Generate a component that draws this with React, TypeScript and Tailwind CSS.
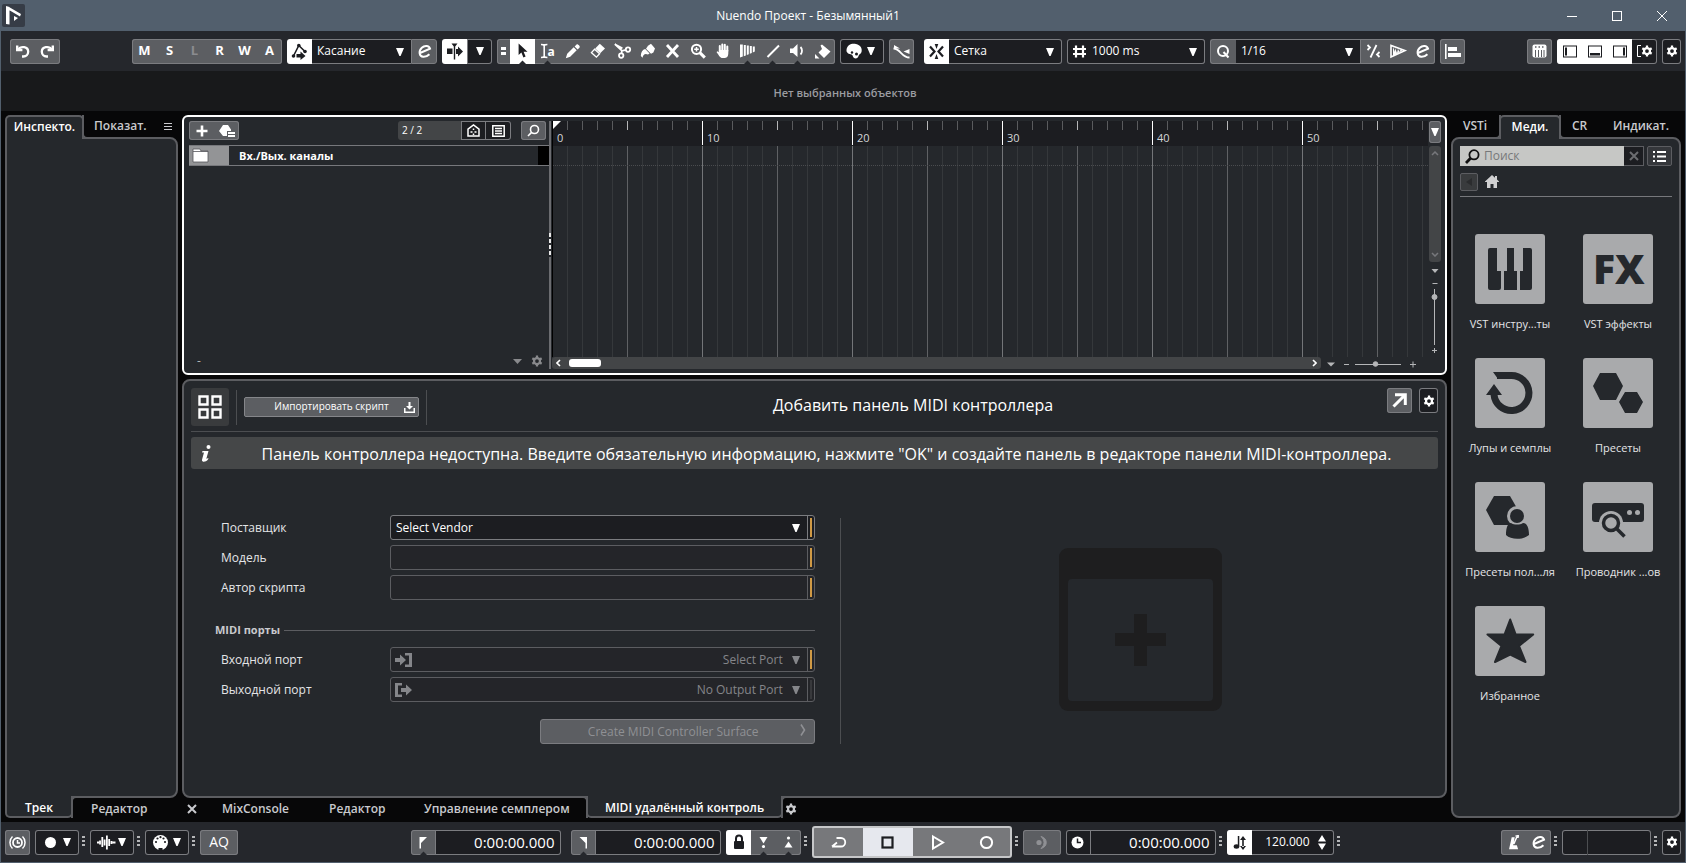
import React from 'react'
import clsx from 'clsx'

interface GlyphProps {
  children: React.ReactNode
  className?: string
}

// every toolbar glyph is drawn on the same 25x25 button grid
function Glyph({ children, className }: GlyphProps) {
  return (
    <svg viewBox="0 0 25 25" className={clsx('w-[25px] h-[25px] shrink-0', className)} fill="currentColor" aria-hidden="true">
      {children}
    </svg>
  )
}

function Caret({ className }: { className?: string }) {
  return (
    <svg viewBox="0 0 8 8" className={clsx('w-2 h-2 shrink-0', className)} fill="currentColor" aria-hidden="true">
      <path d="M0 0H8L4.6 8H3.4Z" />
    </svg>
  )
}

const UndoGlyph = () => (
  <Glyph>
    <path d="M6 6.5h2.4v3.4h4v2.4H6z" />
    <path d="M8 10.8C11 6.5 18.2 7.5 18.2 12.8a4.8 4.8 0 0 1-4.8 4.7H12" fill="none" stroke="currentColor" strokeWidth="2.3" />
  </Glyph>
)

const RedoGlyph = () => (
  <Glyph className="-scale-x-100">
    <path d="M6 6.5h2.4v3.4h4v2.4H6z" />
    <path d="M8 10.8C11 6.5 18.2 7.5 18.2 12.8a4.8 4.8 0 0 1-4.8 4.7H12" fill="none" stroke="currentColor" strokeWidth="2.3" />
  </Glyph>
)

const EditGlyph = () => (
  <Glyph>
    <path
      d="M8 14L18 9.6C17 6.4 12.5 6.2 9.8 8.8C6.4 12 7 17.4 11.2 17.8C13.6 18 15.6 17 17.4 15.2"
      fill="none"
      stroke="currentColor"
      strokeWidth="2"
    />
  </Glyph>
)

const GearGlyph = ({ className }: { className?: string }) => (
  <svg viewBox="0 0 16 16" className={clsx('shrink-0', className ?? 'w-3.5 h-3.5')} fill="none" stroke="currentColor" aria-hidden="true">
    <circle cx="8" cy="8" r="4" strokeWidth="3" />
    <path d="M8 .8v3M8 12.2v3M1.8 4.4l2.5 1.5M11.7 10.1l2.5 1.5M1.8 11.6l2.5-1.5M11.7 5.9l2.5-1.5" strokeWidth="3" />
  </svg>
)

const TOOLS = [
  { name: 'Выбор объекта', active: true, notch: true, icon: <path d="M8.6 4.5V16l2.8-2.4 2 4.8 2.2-1-2-4.6h3.9z" /> },
  {
    name: 'Выбор диапазона',
    notch: true,
    icon: (
      <>
        <path d="M6 5.5c2 0 2.8.3 3.2 1 .4-.7 1.2-1 3.2-1M6 18.5c2 0 2.8-.3 3.2-1 .4.7 1.2 1 3.2 1M9.2 6v12" fill="none" stroke="currentColor" strokeWidth="1.6" />
        <text x="12.6" y="17" fontSize="12" fontWeight="700">a</text>
      </>
    )
  },
  { name: 'Карандаш', icon: <path d="M5.8 19.2l1.4-4.4 6.5-6.5 3 3-6.5 6.5zM14.6 7.4l2-2c1-1 4 2 3 3l-2 2z" /> },
  {
    name: 'Ластик',
    icon: (
      <>
        <path d="M10.2 9.4l4.6-4.6 5.2 4.6-4.8 4.8z" />
        <path d="M9.6 10.2l-3.2 3.4 5 4.6 3.2-3.4z" fill="none" stroke="currentColor" strokeWidth="1.3" />
      </>
    )
  },
  {
    name: 'Разрезать',
    icon: (
      <g fill="none" stroke="currentColor" strokeWidth="1.8">
        <circle cx="11.2" cy="16.6" r="2.2" />
        <circle cx="18" cy="10.6" r="2.2" />
        <path d="M4.8 5.2L12 11.8l4-1M12 11.8l-.6 3M4.8 5.2l7.6 4.2" />
      </g>
    )
  },
  {
    name: 'Склеить',
    icon: (
      <>
        <path d="M13 6.800l3-2 4 4.600-1.600 4-2.400 1.400-5-5z" />
        <path d="M10.200 10l4.400 4.600-1.600.8C10 14 8 15.500 7.600 18.800L5.800 17C6 13 7.500 10.800 10.200 10z" />
      </>
    )
  },
  { name: 'Заглушить', icon: <path d="M7 6l11 12M18 6L7 18" fill="none" stroke="currentColor" strokeWidth="2.8" /> },
  {
    name: 'Масштаб',
    icon: (
      <g fill="none" stroke="currentColor">
        <circle cx="11.5" cy="10.3" r="4.6" strokeWidth="2" />
        <path d="M14.8 13.6l5 5" strokeWidth="3" />
        <path d="M9.2 10.3h4.6M11.5 8v4.6" strokeWidth="1.5" />
      </g>
    )
  },
  {
    name: 'Рука',
    icon: (
      <>
        <path d="M9.8 12.5V7M12.3 12V5.5M14.8 12V5.8M17.3 12V7.5" stroke="currentColor" strokeWidth="2" strokeLinecap="round" />
        <path d="M8.8 11h9.5v3.5c0 3-1.5 4.500-4 4.500h-1.800c-2 0-3-1.500-6-6l1.300-.8 1.500 1.400z" />
      </>
    )
  },
  { name: 'Комп', notch: true, icon: <path d="M5 5.500h2.800V17.500L5 18.500zM8.800 6h2v10.400l-2 .8zM11.800 6.500h2v8.800l-2 .7zM14.800 7h2v7l-2 .8zM17.800 7.500h2v5l-2 1z" /> },
  { name: 'Линия', notch: true, icon: <path d="M7.5 18L19 6.500" stroke="currentColor" strokeWidth="2" /> },
  {
    name: 'Прослушать',
    notch: true,
    icon: (
      <>
        <path d="M5 9.500h3l4.500-4.500v13L8 14H5z" />
        <path d="M15.500 8c2 2 2 5.500 0 7.500" fill="none" stroke="currentColor" strokeWidth="1.8" />
      </>
    )
  },
  { name: 'Цвет', icon: <path d="M10.500 6.500l1.500-1 8.500 7-6.500 6.500-5.500-5.500 3.500-3.500zM5 15l4.500 4.500H5z" /> }
]

interface IconButtonProps extends React.ButtonHTMLAttributes<HTMLButtonElement> {
  label: string
}

function IconButton({ label, className, children, ...rest }: IconButtonProps) {
  return (
    <button type="button" aria-label={label} className={clsx('flex items-center justify-center', className)} {...rest}>
      {children}
    </button>
  )
}

interface GroupProps {
  children: React.ReactNode
  className?: string
  height?: string
  dark?: boolean
}

// rounded bordered strip that holds a set of toolbar controls
function Group({ children, className, height = 'h-[25px]', dark }: GroupProps) {
  return (
    <div
      className={clsx(
        'flex shrink-0 items-stretch overflow-hidden rounded-[3px] ring-1 ring-inset ring-[#7b7c80]',
        height,
        dark ? 'bg-[#1c1d21]' : 'bg-[#5c5e62]',
        className
      )}
    >
      {children}
    </div>
  )
}

function Dropdown({ label, value, className }: { label: string; value: string; className?: string }) {
  return (
    <div className={clsx('relative h-[25px] rounded-[3px] border border-[#7b7c80] bg-[#1c1d21]', className)}>
      <select aria-label={label} className="h-full w-full appearance-none bg-transparent pl-[5px] text-xs outline-none">
        <option>{value}</option>
      </select>
      <Caret className="pointer-events-none absolute right-[7px] top-2" />
    </div>
  )
}

function Dots() {
  return <span className="h-3 w-[3px] shrink-0 bg-[repeating-linear-gradient(#b5b6b8_0_2px,transparent_2px_4px)]" />
}

function TitleBar() {
  return (
    <header className="grid h-[31px] shrink-0 grid-cols-[1fr_auto_1fr] items-center text-white">
      <svg viewBox="0 0 23 23" className="ml-px h-[23px] w-[23px]" aria-hidden="true">
        <rect width="23" height="23" rx="2" fill="#363c46" />
        <path d="M4 2l3.500 1v17.500L4 20zM7 3l12 7-1 2.500L7 6z" fill="#fff" />
        <path d="M12 12l4 2-4 3z" fill="#fff" />
      </svg>
      <h1 className="mr-[70px] text-xs">Nuendo Проект - Безымянный1</h1>
      <div className="flex justify-end">
        <IconButton label="Свернуть" className="h-[31px] w-[45px]">
          <svg viewBox="0 0 10 10" className="h-2.5 w-2.5" stroke="#fff"><path d="M0 5.500h10" /></svg>
        </IconButton>
        <IconButton label="Развернуть" className="h-[31px] w-[45px]">
          <svg viewBox="0 0 10 10" className="h-2.5 w-2.5" stroke="#fff" fill="none"><rect x=".5" y=".5" width="9" height="9" /></svg>
        </IconButton>
        <IconButton label="Закрыть" className="h-[31px] w-[46px]">
          <svg viewBox="0 0 10 10" className="h-2.5 w-2.5" stroke="#fff"><path d="M0 0l10 10M10 0L0 10" /></svg>
        </IconButton>
      </div>
    </header>
  )
}

const STATES = ['M', 'S', 'L', 'R', 'W', 'A']

function Toolbar() {
  return (
    <div className="flex h-10 shrink-0 items-center gap-[5px] bg-[#25272c] pl-[9px] pr-1 text-white">
      <Group className="mr-[67px]">
        <IconButton label="Отменить"><UndoGlyph /></IconButton>
        <IconButton label="Повторить"><RedoGlyph /></IconButton>
      </Group>

      <Group>
        {STATES.map((s) => (
          <button key={s} type="button" className={clsx('w-[25px] text-[13px] font-bold', s === 'L' && 'text-[#8b8c90]')}>
            {s}
          </button>
        ))}
      </Group>

      <div className="flex">
        <IconButton label="Автоматизация" className="rounded-l-[3px] bg-white text-[#1c1d21]">
          <Glyph>
            <path d="M6.5 17L11.8 6.5L18 12.5" fill="none" stroke="currentColor" strokeWidth="1.6" />
            <circle cx="6.5" cy="17" r="1.8" /><circle cx="11.8" cy="6.5" r="1.8" /><circle cx="18" cy="12.5" r="1.8" />
            <path d="M9.5 15h4v-2.500l5 4.500-5 4v-2.500h-4z" />
          </Glyph>
        </IconButton>
        <Dropdown label="Режим автоматизации" value="Касание" className="w-[99px] rounded-none border-x-0" />
        <IconButton label="Панель автоматизации" className="w-[26px] rounded-r-[3px] border border-[#7b7c80] bg-[#5c5e62]">
          <span className="-my-px flex"><EditGlyph /></span>
        </IconButton>
      </div>

      <div className="flex">
        <IconButton label="Автопрокрутка" className="rounded-l-[3px] bg-white text-[#1c1d21]">
          <Glyph>
            <path d="M5 9.500h5.500v5.500H5zM9.500 4.500h6l-2.300 3v13h-1.400v-13zM14 10h2V7.500l5 5-5 5V15h-2z" />
          </Glyph>
        </IconButton>
        <Group dark className="w-[25px] rounded-l-none">
          <IconButton label="Параметры автопрокрутки" className="w-full"><Caret /></IconButton>
        </Group>
      </div>

      <Group>
        <IconButton label="Инструменты" className="w-[13px]">
          <svg viewBox="0 0 5 8" className="h-2 w-[5px]" fill="currentColor"><path d="M0 0h5v3H0zM0 5h5v3H0z" /></svg>
        </IconButton>
        {TOOLS.map((tool) => (
          <IconButton key={tool.name} label={tool.name} className={clsx(tool.active && 'bg-white text-[#1c1d21]')}>
            <Glyph>
              {tool.icon}
              {tool.notch && <path d="M9 25l3.500-3.500L16 25z" fill="#25272c" />}
            </Glyph>
          </IconButton>
        ))}
      </Group>

      <Group dark className="w-11">
        <IconButton label="Цвета" className="w-full pr-2">
          <Glyph>
            <path d="M4.500 11C5 5.500 10 4 14 5c4.500 1 6.500 4.500 5.500 8-.5 2-2.500 2-3 4-.4 2-2.500 3-4.500 2-1.500-1-1-3-2.500-3.500C7 15 4.200 14 4.500 11z" />
            <circle cx="10" cy="13.5" r="1.2" fill="#1c1d21" /><circle cx="14.5" cy="15" r="1.5" fill="#1c1d21" />
          </Glyph>
          <Caret />
        </IconButton>
      </Group>

      <Group className="mr-[5px]">
        <IconButton label="Кроссфейд">
          <Glyph>
            <path d="M4.500 9.500c7 0 8 9 16 9" fill="none" stroke="currentColor" strokeWidth="1.8" />
            <path d="M5 6l6 3.500H5zM20.500 10v5l-6-2.500z" />
          </Glyph>
        </IconButton>
      </Group>

      <div className="flex">
        <IconButton label="Привязка" className="rounded-l-[3px] bg-white text-[#1c1d21]">
          <Glyph>
            <path d="M6 7.500l4.500 5-4.500 5M19 7.500l-4.500 5 4.500 5" fill="none" stroke="currentColor" strokeWidth="2.2" />
            <path d="M10.700 5h3.600l-1.800 5zM10.700 20h3.600l-1.800-5z" />
          </Glyph>
        </IconButton>
        <Dropdown label="Тип привязки" value="Сетка" className="w-[113px] rounded-l-none border-l-0" />
      </div>

      <Group dark>
        <Glyph className="-mr-[5px]">
          <path d="M9 6.500v12M16 6.500v12M6 10h13M6 15h13" stroke="currentColor" strokeWidth="2.2" />
        </Glyph>
        <Dropdown label="Шаг сетки" value="1000 ms" className="w-[118px] rounded-l-none border-l-0" />
      </Group>

      <div className="flex">
        <IconButton label="Квантизация" className="rounded-l-[3px] border border-r-0 border-[#7b7c80] bg-[#5c5e62]">
          <Glyph className="-my-px">
            <circle cx="12" cy="12" r="5" fill="none" stroke="currentColor" strokeWidth="2" />
            <path d="M12.500 13l5 5.500" stroke="currentColor" strokeWidth="2" />
          </Glyph>
        </IconButton>
        <Dropdown label="Пресет квантизации" value="1/16" className="w-[124px] rounded-none border-x-0" />
        <Group className="rounded-l-none">
          <IconButton label="Итеративная квантизация">
            <Glyph>
              <path d="M7.500 6l2.500 2.500L7.500 11M19.500 13L17 15.500l2.500 2.500M16.500 6l-6 12.500" fill="none" stroke="currentColor" strokeWidth="1.8" />
            </Glyph>
          </IconButton>
          <IconButton label="Квантизация аудио">
            <Glyph>
              <path d="M6 18V6.500l14 5z" fill="none" stroke="currentColor" strokeWidth="1.6" />
              <path d="M8 14V8l2 5V9l2 5 1-4 1.500 3 1-2.500 2 1L8 17z" />
            </Glyph>
          </IconButton>
          <IconButton label="Панель квантизации"><EditGlyph /></IconButton>
        </Group>
      </div>

      <Group>
        <IconButton label="Выравнивание">
          <Glyph><path d="M5 5h1.600v15H5zM8 8h9v4H8zM8 14h13v4H8z" /></Glyph>
        </IconButton>
      </Group>

      <Group className="ml-auto">
        <IconButton label="Экранная клавиатура">
          <Glyph>
            <rect x="5.5" y="5.5" width="14" height="13" rx="2" />
            <path d="M8 8h1.500M11.500 8h1.500M15 8h1.500" stroke="#5c5e62" strokeWidth="1.5" />
            <path d="M8.500 11v7M11.500 11v7M14.500 11v7M17 11v7" stroke="#5c5e62" />
          </Glyph>
        </IconButton>
      </Group>

      <Group dark>
        <span className="flex bg-white text-[#1c1d21]">
          <IconButton label="Левая зона">
            <Glyph><rect x="6.5" y="7" width="13" height="11" fill="none" stroke="currentColor" /><path d="M8 8.500h2v8H8z" /></Glyph>
          </IconButton>
          <IconButton label="Нижняя зона">
            <Glyph><rect x="6.5" y="7" width="13" height="11" fill="none" stroke="currentColor" /><path d="M8 14h10v2.500H8z" /></Glyph>
          </IconButton>
          <IconButton label="Правая зона">
            <Glyph><rect x="6.5" y="7" width="13" height="11" fill="none" stroke="currentColor" /><path d="M16 8.500h2v8h-2z" /></Glyph>
          </IconButton>
        </span>
        <IconButton label="Настройка окна" className="w-[25px]">
          <svg viewBox="0 0 4 12" className="h-3 w-1" fill="none" stroke="currentColor"><path d="M4 .5H.5v11H4" /></svg>
          <GearGlyph className="h-3 w-3" />
        </IconButton>
      </Group>

      <Group dark className="w-[19px]">
        <IconButton label="Настройка панели" className="w-full"><GearGlyph className="h-3 w-3" /></IconButton>
      </Group>
    </div>
  )
}

const TAB = 'text-xs font-semibold whitespace-nowrap'

function LeftZone() {
  return (
    <aside className="flex flex-col">
      <div className="relative z-10 flex h-6 items-stretch">
        <button type="button" className={clsx(TAB, '-mr-0.5 w-[79px] rounded-t-[5px] border-2 border-b-0 border-[#5c5d61] bg-[#25282c] pb-0.5 text-white')}>
          Инспекто.
        </button>
        <div className="relative mr-2 flex flex-1 items-center justify-between rounded-bl-[5px] border-b-2 border-l-2 border-[#5c5d61] bg-[#070708] pl-2.5 text-[#c9cace]">
          <button type="button" className={TAB}>Показат.</button>
          <IconButton label="Меню" className="-mr-0.5 h-2 w-2">
            <svg viewBox="0 0 8 7" className="h-[7px] w-2" stroke="currentColor"><path d="M0 .5h8M0 3.500h8M0 6.500h8" /></svg>
          </IconButton>
        </div>
      </div>
      <div className="-mt-0.5 flex-1 rounded-r-[8px] border-2 border-[#5c5d61] bg-[#25282c]" />
      <div className="relative -mt-0.5 flex h-[22px] items-stretch">
        <button type="button" className={clsx(TAB, '-mr-0.5 w-[68px] rounded-b-[5px] border-2 border-t-0 border-[#5c5d61] bg-[#25282c] pt-1 text-white')}>
          Трек
        </button>
        <div className="relative mr-2 flex flex-1 items-center rounded-tl-[5px] border-l-2 border-t-2 border-[#5c5d61] bg-[#070708] pl-[18px] pt-0.5 text-[#c9cace]">
          <button type="button" className={TAB}>Редактор</button>
        </div>
      </div>
    </aside>
  )
}

function TrackList() {
  return (
    <div className="flex w-[364px] shrink-0 flex-col">
      <div className="ml-1 mr-[3px] flex h-[19px] items-stretch text-white">
        <Group height="h-[19px]" className="w-[50px]">
          <IconButton label="Добавить трек" className="w-[25px]">
            <svg viewBox="0 0 12 12" className="h-3 w-3" stroke="#fff" strokeWidth="2.6"><path d="M6 .5v11M.5 6h11" /></svg>
          </IconButton>
          <IconButton label="Пресет трека" className="w-[25px]">
            <svg viewBox="0 0 16 12" className="h-3 w-4" fill="#fff">
              <path d="M4 0h5l3 4.500V6H8v5H4L0 6z" /><path d="M9 7h7v2H9zM9 10h7v2H9z" />
            </svg>
          </IconButton>
        </Group>
        <span className="ml-auto flex w-[63px] items-center rounded-l-[3px] bg-[#434547] pl-1 text-[10px]">2 / 2</span>
        <Group dark height="h-[19px]" className="w-[50px] rounded-l-none">
          <IconButton label="Видимость агентов" className="w-[25px] border-r border-[#7b7c80]">
            <svg viewBox="0 0 13 13" className="h-[13px] w-[13px]" fill="none" stroke="#fff" strokeWidth="1.5">
              <path d="M1 5.200L6.500 1 12 5.200V12H1z" /><path d="M3.500 8h2M7.500 8h2M6.500 4.500v1.500M6.500 9.500V11" />
            </svg>
          </IconButton>
          <IconButton label="Разделить список" className="w-[25px]">
            <svg viewBox="0 0 13 12" className="h-3 w-[13px]" fill="none" stroke="#fff" strokeWidth="1.5"><path d="M.8.8h11.400v10.400H.8zM3 3.500h7M3 6h7M3 8.500h7" /></svg>
          </IconButton>
        </Group>
        <Group height="h-[19px]" className="ml-2.5 w-[25px]">
          <IconButton label="Найти трек" className="w-full">
            <svg viewBox="0 0 13 13" className="h-[13px] w-[13px]" fill="none" stroke="#fff" strokeWidth="1.6"><circle cx="7.5" cy="5.5" r="4" /><path d="M4.600 8.400L1 12" /></svg>
          </IconButton>
        </Group>
      </div>

      <div className="ml-1 mt-[5px] flex h-[21px] items-stretch border-y border-[#77787c]">
        <span className="flex w-10 items-center bg-[#939496] pl-[3px]">
          <svg viewBox="0 0 17 15" className="h-[15px] w-[17px]" fill="#fff"><path d="M1 1h7l1 2h7v11H1z" stroke="#55565a" strokeWidth=".8" /><path d="M1 3.500h15" stroke="#55565a" strokeWidth=".8" /></svg>
        </span>
        <span className="flex flex-1 items-center pl-2.5 pt-0.5 text-[11px] font-bold text-white">Вх./Вых. каналы</span>
        <span className="w-[11px] bg-black" />
      </div>

      <div className="mt-auto flex h-4 items-center justify-between pl-3 pr-1.5 text-xs text-[#b5b6b8]">
        <span>-</span>
        <span className="flex items-center gap-[9px] text-[#898a8d]">
          <svg viewBox="0 0 9 5" className="h-[5px] w-[9px]" fill="currentColor"><path d="M0 0h9L4.500 5z" /></svg>
          <GearGlyph className="h-3 w-3" />
        </span>
      </div>
    </div>
  )
}

const SECONDS = Array.from({ length: 140 }, (_, i) => i)
const LABELS = [0, 10, 20, 30, 40, 50]
const PX_PER_SECOND = 15

function Timeline() {
  return (
    <div className="flex min-w-0 flex-1 flex-col">
      <div className="flex flex-1">
        <div className="flex min-w-0 flex-1 flex-col border-l border-black">
          <div className="relative h-[25px] overflow-hidden bg-[#1c1d21]">
            <svg width="100%" height="25" className="absolute inset-0" aria-hidden="true">
              {SECONDS.map((s) => (
                <path
                  key={s}
                  d={`M${s * PX_PER_SECOND - 0.5} 0v${s % 10 ? 9 : 24}`}
                  stroke={s % 10 === 0 ? '#fff' : s % 5 === 0 ? '#b5b6b8' : '#5a5b5e'}
                />
              ))}
              <path d="M0 0h8L0 8z" fill="#fff" />
            </svg>
            <div className="relative flex pt-[9px] text-[11px] leading-4 text-[#d5d6d8]">
              {LABELS.map((n) => (
                <span key={n} className="w-[150px] shrink-0 pl-1">{n}</span>
              ))}
            </div>
          </div>
          <svg width="100%" className="h-[211px] flex-1" aria-hidden="true">
            {SECONDS.slice(1).map((s) => (
              <line
                key={s}
                x1={s * PX_PER_SECOND - 0.5}
                x2={s * PX_PER_SECOND - 0.5}
                y1="0"
                y2="100%"
                stroke={s % 10 === 0 ? '#737578' : s % 5 === 0 ? '#5f6164' : '#35383b'}
              />
            ))}
            <line x1="0" x2="100%" y1="19.5" y2="19.5" stroke="#4a4c4f" strokeDasharray="1 1" />
          </svg>
        </div>

        <div className="ml-px mr-1 flex w-3 flex-col items-center text-[#b5b6b8]">
          <Group height="h-[22px]" className="w-3">
            <IconButton label="Формат линейки" className="w-full text-white"><Caret /></IconButton>
          </Group>
          <div className="mt-[3px] flex h-[116px] w-3 flex-col items-center justify-between rounded-[3px] bg-[#434547] py-[5px] text-[#77787c]">
            <svg viewBox="0 0 8 5" className="h-[5px] w-2" fill="none" stroke="currentColor" strokeWidth="1.5"><path d="M1 4l3-3 3 3" /></svg>
            <svg viewBox="0 0 8 5" className="h-[5px] w-2" fill="none" stroke="currentColor" strokeWidth="1.5"><path d="M1 1l3 3 3-3" /></svg>
          </div>
          <svg viewBox="0 0 12 94" className="h-[94px] w-3" fill="currentColor" stroke="currentColor" aria-hidden="true">
            <path d="M2.500 7h7L6 11z" stroke="none" />
            <path d="M3.500 21.500h5M5.500 27v56M3 88.500h5M5.500 86v5" />
            <circle cx="5.5" cy="35" r="2.5" />
          </svg>
        </div>
      </div>

      <div className="flex h-3 items-center">
        <div className="flex h-3 flex-1 items-center rounded-[3px] bg-[#434547] px-1 text-white">
          <svg viewBox="0 0 5 8" className="h-2 w-[5px]" fill="none" stroke="currentColor" strokeWidth="1.6"><path d="M4 1L1 4l3 3" /></svg>
          <span className="ml-2 h-2 w-8 rounded-[3px] bg-white" />
          <svg viewBox="0 0 5 8" className="ml-auto h-2 w-[5px]" fill="none" stroke="currentColor" strokeWidth="1.6"><path d="M1 1l3 3-3 3" /></svg>
        </div>
        <svg viewBox="0 0 124 12" className="h-3 w-[124px] text-[#b5b6b8]" fill="currentColor" stroke="currentColor" aria-hidden="true">
          <path d="M6 5.500h8l-4 4z" stroke="none" />
          <path d="M23 7.500h5M34 7.500h46M89 7.500h6M92 4.500v6" />
          <circle cx="54.5" cy="7" r="2.3" />
        </svg>
      </div>
    </div>
  )
}

function ProjectWindow() {
  return (
    <section className="flex h-[260px] shrink-0 rounded-[6px] border-2 border-white bg-[#25282c] pb-1 pl-px pt-1">
      <TrackList />
      <div className="flex w-[3px] shrink-0 flex-col items-start justify-center bg-[linear-gradient(90deg,#6b6c70_2px,transparent_2px)]">
        <span className="h-6 w-0.5 bg-[repeating-linear-gradient(#e8e8e8_0_4px,#25282c_4px_6px)]" />
      </div>
      <Timeline />
    </section>
  )
}

interface FieldProps {
  id: string
  label: string
  value?: string
  kind?: 'select' | 'text' | 'port'
  required?: boolean
  icon?: React.ReactNode
}

function Field({ id, label, value, kind = 'text', required = true, icon }: FieldProps) {
  return (
    <div className="flex items-center">
      <label htmlFor={id} className="w-[169px] shrink-0 text-xs text-[#e4e5e7]">{label}</label>
      <div
        className={clsx(
          'relative flex h-[25px] flex-1 rounded-[3px] border',
          kind === 'select' ? 'border-[#7b7c80] bg-[#1c1d21] text-white' : 'border-[#5c5d61] bg-[#242529] text-[#85868a]'
        )}
      >
        {icon && <span className="flex w-[22px] items-center justify-center pl-0.5">{icon}</span>}
        {kind === 'text' ? (
          <input id={id} type="text" className="min-w-0 flex-1 bg-transparent px-1.5 text-xs outline-none" />
        ) : (
          <select
            id={id}
            className={clsx(
              'min-w-0 flex-1 appearance-none bg-transparent text-xs outline-none',
              kind === 'port' ? 'pr-6 [text-align-last:right]' : 'pl-[5px]'
            )}
          >
            <option>{value}</option>
          </select>
        )}
        {kind !== 'text' && <Caret className="pointer-events-none absolute right-3.5 top-2" />}
        <span className="flex w-[7px] items-center justify-center border-l border-inherit">
          <span className={clsx('h-[19px] w-0.5', required ? 'bg-[#d09a45]' : 'bg-[#38393c]')} />
        </span>
      </div>
    </div>
  )
}

const InPort = () => (
  <svg viewBox="0 0 17 14" className="h-3.5 w-[17px]" fill="currentColor"><path d="M0 5h5V1.500l6 5.500-6 5.500V9H0zM10 0h7v14h-7v-2.500h4v-9h-4z" /></svg>
)

const OutPort = () => (
  <svg viewBox="0 0 17 14" className="h-3.5 w-[17px]" fill="currentColor"><path d="M0 0h7v2.500H3v9h4V14H0zM6 5h5V1.500L17 7l-6 5.500V9H6z" /></svg>
)

function MidiRemote() {
  return (
    <section className="flex flex-1 flex-col rounded-[8px] border-2 border-[#5c5d61] bg-[#25282c] px-[7px] pt-[7px] text-white">
      <div className="flex items-start border-b border-[#4c4e51] pb-[5px]">
        <div className="flex items-center">
          <IconButton label="Панели контроллеров" className="h-[38px] w-[38px] rounded-[3px] bg-[#393b3d]">
            <svg viewBox="0 0 24 24" className="h-6 w-6" fill="none" stroke="#fff" strokeWidth="2.4">
              <path d="M1.500 1.500H9.500v8H1.500zM14.500 1.500h8v8h-8zM1.500 14.500h8v8h-8zM14.500 14.500h8v8h-8z" />
            </svg>
          </IconButton>
          <span className="ml-[7px] h-[35px] w-px bg-[#4c4e51]" />
          <button type="button" className="relative ml-[7px] h-5 w-[175px] rounded-[2px] border border-[#85868a] bg-[#5c5e62] text-[10px]">
            Импортировать скрипт
            <svg viewBox="0 0 11 11" className="absolute right-[3px] top-1 h-[11px] w-[11px]" fill="#fff">
              <path d="M4.500 0h2v4H9L5.500 7.500 2 4h2.500zM0 6h1.500v3.500h8V6H11v5H0z" />
            </svg>
          </button>
          <span className="ml-[7px] h-[35px] w-px bg-[#4c4e51]" />
        </div>
        <h2 className="flex-1 pl-3 pt-[5px] text-center text-base leading-6">Добавить панель MIDI контроллера</h2>
        <div className="flex justify-end gap-[7px]">
          <Group>
            <IconButton label="Открыть в отдельном окне">
              <Glyph><path d="M6.500 18.500L17 8M8 6.800h10.300V17" fill="none" stroke="currentColor" strokeWidth="3" /></Glyph>
            </IconButton>
          </Group>
          <Group dark className="w-[19px]">
            <IconButton label="Настройки MIDI" className="w-full"><GearGlyph className="h-3 w-3" /></IconButton>
          </Group>
        </div>
      </div>

      <div className="mt-[5px] flex h-8 items-center rounded-[3px] bg-[#454748]">
        <svg viewBox="0 0 10 17" className="ml-2.5 h-[17px] w-2.5 shrink-0" fill="#fff" aria-hidden="true">
          <circle cx="7.5" cy="2" r="2" />
          <path d="M1.500 6h6L5.300 13.800l2.200-.8-.5 1.500C5.500 16.500 3 17 1.800 16.500c-1-.4-.9-1.500-.6-2.500L3 7.500H1z" />
        </svg>
        <p className="w-full pl-1 pt-0.5 text-center text-base">
          Панель контроллера недоступна. Введите обязательную информацию, нажмите "OK" и создайте панель в редакторе панели MIDI-контроллера.
        </p>
      </div>

      <div className="-mx-[7px] mt-[46px] grid grid-cols-[13fr_12fr]">
        <form className="flex flex-col gap-[5px] pl-[37px] pr-[25px]">
          <Field id="vendor" label="Поставщик" kind="select" value="Select Vendor" />
          <Field id="model" label="Модель" />
          <Field id="author" label="Автор скрипта" />
          <div className="-ml-1.5 mb-0.5 mt-[15px] flex h-5 items-center gap-1">
            <h3 className="text-[11px] font-bold text-[#c9cace]">MIDI порты</h3>
            <span className="h-px flex-1 bg-[#5c5d61]" />
          </div>
          <Field id="in-port" label="Входной порт" kind="port" value="Select Port" icon={<InPort />} />
          <Field id="out-port" label="Выходной порт" kind="port" value="No Output Port" required={false} icon={<OutPort />} />
          <button type="button" disabled className="relative mt-3 h-[25px] w-[275px] self-end rounded-[3px] border border-[#7b7c80] bg-[#5c5e62] pr-2 text-xs text-[#8f9094]">
            Create MIDI Controller Surface
            <svg viewBox="0 0 6 12" className="absolute right-2 top-1 h-3 w-1.5" fill="none" stroke="currentColor" strokeWidth="1.6"><path d="M1 .5L4.500 6 1 11.500" /></svg>
          </button>
        </form>
        <div className="mt-[3px] flex items-center justify-center border-l border-[#4c4e51] pb-1 pr-1">
          <svg viewBox="0 0 163 163" className="h-[163px] w-[163px]" aria-hidden="true">
            <rect width="163" height="163" rx="9" fill="#1e1e1f" />
            <rect x="9" y="31" width="145" height="122" rx="4" fill="#25282c" />
            <path d="M75 66h13v19h19v13H88v20H75V98H56V85h19z" fill="#1e1e1f" />
          </svg>
        </div>
      </div>
    </section>
  )
}

function LowerTabs() {
  return (
    <div className="relative -mt-0.5 flex h-[22px] items-stretch text-[#c9cace]">
      <div className="relative -mr-0.5 ml-2 flex w-[398px] items-center rounded-tr-[5px] border-r-2 border-t-2 border-[#5c5d61] bg-[#070708] pt-0.5">
        <IconButton label="Закрыть зону" className="-ml-1.5 h-4 w-4">
          <svg viewBox="0 0 10 10" className="h-2.5 w-2.5" stroke="currentColor" strokeWidth="2"><path d="M1 1l8 8M9 1L1 9" /></svg>
        </IconButton>
        <button type="button" className={clsx(TAB, 'ml-[22px] w-[68px] text-left')}>MixConsole</button>
        <button type="button" className={clsx(TAB, 'ml-[39px] w-[56px] text-left')}>Редактор</button>
        <button type="button" className={clsx(TAB, 'ml-[39px] text-left')}>Управление семплером</button>
      </div>
      <button type="button" className={clsx(TAB, '-mr-0.5 w-[197px] rounded-b-[5px] border-2 border-t-0 border-[#5c5d61] bg-[#25282c] pt-1 text-white')}>
        MIDI удалённый контроль
      </button>
      <div className="relative mr-2 flex flex-1 items-center rounded-tl-[5px] border-l-2 border-t-2 border-[#5c5d61] bg-[#070708] pl-0.5 pt-0.5">
        <IconButton label="Настройка вкладок"><GearGlyph className="h-3 w-3" /></IconButton>
      </div>
    </div>
  )
}

const MEDIA = [
  {
    name: 'VST инстру...ты',
    icon: (
      <path d="M15 14h7v23h4v17q0 2-2 2H15q-2 0-2-2V16q0-2 2-2zM32 14h7v23h3v19H29V37h3zM48 14h7q2 0 2 2v38q0 2-2 2H45V37h3z" />
    )
  },
  { name: 'VST эффекты', icon: <text x="10" y="50" fontSize="41" fontWeight="800" fontFamily="Open Sans">FX</text> },
  {
    name: 'Лупы и семплы',
    icon: (
      <>
        <path d="M22 17.500h14a17.500 17.500 0 1 1-17 19" fill="none" stroke="currentColor" strokeWidth="7" />
        <path d="M11 37l8-11 8 11zM18 14h8v7h-3z" />
      </>
    )
  },
  { name: 'Пресеты', icon: <path d="M17 15h16l7 13-7 14H17l-7-14zM42 34h12l6 10-6 11H42l-6-11z" /> },
  {
    name: 'Пресеты пол...ля',
    icon: (
      <>
        <path d="M19 14h16l8 14-8 15H19l-8-15z" />
        <circle cx="42" cy="34" r="10" fill="#a9aaac" />
        <circle cx="42" cy="34" r="7" />
        <path d="M31 53c0-8 2-12 5-12 3 2 9 2 12 0 4 0 6 5 6 12-6 5-18 5-23 0z" />
      </>
    )
  },
  {
    name: 'Проводник ...ов',
    icon: (
      <>
        <rect x="9" y="21" width="52" height="19" rx="3" />
        <circle cx="46.5" cy="30.5" r="2.5" fill="#a9aaac" /><circle cx="54.5" cy="30.5" r="2.5" fill="#a9aaac" />
        <circle cx="28" cy="41" r="12" fill="#a9aaac" />
        <circle cx="28" cy="41" r="7.5" fill="none" stroke="currentColor" strokeWidth="3.5" />
        <path d="M33.500 46.500l8 8" stroke="currentColor" strokeWidth="3.5" />
      </>
    )
  },
  {
    name: 'Избранное',
    icon: <path d="M35.200 13.500l5.500 15h17.500L44 40l6.500 16-15.300-7.500L20 56l6.500-16L12.500 28.500h17z" stroke="currentColor" strokeWidth="2" strokeLinejoin="round" />
  }
]

function RightZone() {
  return (
    <aside className="flex flex-col">
      <div className="relative z-10 flex h-6 items-stretch text-[#c9cace]">
        <div className="relative -mr-0.5 ml-2 flex w-[42px] items-center rounded-br-[5px] border-b-2 border-r-2 border-[#5c5d61] bg-[#070708] pl-1">
          <button type="button" className={TAB}>VSTi</button>
        </div>
        <button type="button" className={clsx(TAB, '-mr-0.5 w-[62px] rounded-t-[5px] border-2 border-b-0 border-[#5c5d61] bg-[#25282c] pb-0.5 text-white')}>
          Меди.
        </button>
        <div className="relative mr-2 flex flex-1 items-center justify-between rounded-bl-[5px] border-b-2 border-l-2 border-[#5c5d61] bg-[#070708] pl-[11px] pr-1">
          <button type="button" className={TAB}>CR</button>
          <button type="button" className={TAB}>Индикат.</button>
        </div>
      </div>
      <div className="-mt-0.5 flex-1 rounded-[8px] border-2 border-[#5c5d61] bg-[#25282c] px-[7px] pt-[7px]">
        <div className="flex h-5 items-stretch">
          <div className="flex flex-1 items-center bg-[#c6c7c5] pl-[5px]">
            <svg viewBox="0 0 15 15" className="h-[15px] w-[15px] shrink-0" fill="none" stroke="#111">
              <circle cx="9" cy="5.8" r="4.6" strokeWidth="1.8" /><path d="M5.500 9.300L1 14" strokeWidth="2.8" />
            </svg>
            <input type="search" aria-label="Поиск" placeholder="Поиск" className="w-full min-w-0 bg-transparent pl-1 text-xs text-black outline-none placeholder:text-[#77787a]" />
          </div>
          <IconButton label="Очистить" className="w-5 border border-l-0 border-[#5c5d61] bg-[#1c1d21] text-[#6b6c70]">
            <svg viewBox="0 0 10 10" className="h-2.5 w-2.5" stroke="currentColor" strokeWidth="2"><path d="M1 1l8 8M9 1L1 9" /></svg>
          </IconButton>
          <IconButton label="Фильтры" className="ml-[3px] w-[25px] rounded-[2px] border border-[#5c5d61] bg-[#35373b]">
            <svg viewBox="0 0 13 11" className="h-[11px] w-[13px]" fill="#fff"><path d="M0 0h2v2H0zM4 0h9v2H4zM0 4.500h2v2H0zM4 4.500h9v2H4zM0 9h2v2H0zM4 9h9v2H4z" /></svg>
          </IconButton>
        </div>
        <div className="mt-[7px] flex h-6 items-start gap-[7px] border-b border-[#77787c]">
          <IconButton label="Назад" disabled className="h-[18px] w-[18px] rounded-[2px] border border-[#5c5d61] bg-[#393b3d] text-[#2b2c2e]">
            <svg viewBox="0 0 6 8" className="h-2 w-1.5" fill="currentColor"><path d="M6 0v8L0 4z" /></svg>
          </IconButton>
          <IconButton label="Домой" className="mt-0.5 text-[#d0d0d1]">
            <svg viewBox="0 0 14 13" className="h-[13px] w-3.5" fill="currentColor"><path d="M7 0l3 2.800V1h2v3.600L14 6.500V7h-2v6H8.500V9h-3v4H2V7H0v-.5z" /></svg>
          </IconButton>
        </div>
        <div className="-ml-1 mt-[37px] grid grid-cols-2 gap-y-[27px]">
          {MEDIA.map((item) => (
            <button key={item.name} type="button" className="flex flex-col items-center">
              <svg viewBox="0 0 70 70" className="h-[70px] w-[70px] rounded-[3px] bg-[#a9aaac] text-[#25282c]" fill="currentColor" aria-hidden="true">
                {item.icon}
              </svg>
              <span className="mt-[13px] whitespace-nowrap text-[11px] leading-[14px] text-[#e4e5e7]">{item.name}</span>
            </button>
          ))}
        </div>
      </div>
    </aside>
  )
}

function TimeInput({ label }: { label: string }) {
  return (
    <input
      type="text"
      aria-label={`${label}: время`}
      defaultValue="0:00:00.000"
      className="w-full min-w-0 flex-1 bg-transparent pr-1.5 text-right text-[15px] outline-none"
    />
  )
}

function Locator({ label, side }: { label: string; side: 'left' | 'right' }) {
  return (
    <Group dark className="w-[150px]">
      <IconButton label={label} className="w-[25px] rounded-l-[3px] border border-[#7b7c80] bg-[#5c5e62]">
        <Glyph className="-m-px">
          {side === 'left' ? <path d="M8.500 7H16L10 13v5.500H8.500z" /> : <path d="M16 7H8.500l6 6v5.500H16z" />}
          <path d="M9 25l3.500-3.500L16 25z" fill="#25272c" />
        </Glyph>
      </IconButton>
      <TimeInput label={label} />
    </Group>
  )
}

function Transport() {
  return (
    <footer className="flex h-10 shrink-0 items-center bg-[#25272c] px-1 text-white">
      <Group>
        <IconButton label="Ограничение задержки">
          <Glyph>
            <circle cx="12.5" cy="12.5" r="4.5" fill="none" stroke="currentColor" strokeWidth="1.8" />
            <path d="M12.500 10v3h2.500M7.500 6.500c-3.400 3-3.400 9 0 12M17.500 6.500c3.400 3 3.400 9 0 12" fill="none" stroke="currentColor" strokeWidth="1.5" />
          </Glyph>
        </IconButton>
      </Group>
      <Group dark className="ml-[5px] mr-[3px] w-11">
        <IconButton label="Режим записи" className="w-full pr-1.5"><Glyph><circle cx="12.5" cy="12.5" r="5.5" /></Glyph><Caret /></IconButton>
      </Group>
      <Dots />
      <Group dark className="ml-[5px] mr-[3px] w-11">
        <IconButton label="Запись аудио" className="w-full pr-1.5">
          <Glyph><path d="M4 12.500h2M7 10.500v4M9.300 7v10M11.600 9.500v6M13.900 5.500v14M16.200 9v7M18.500 11v3M19.500 12.500h3" stroke="currentColor" strokeWidth="1.8" /></Glyph>
          <Caret />
        </IconButton>
      </Group>
      <Dots />
      <Group dark className="ml-[5px] mr-[3px] w-11">
        <IconButton label="Запись MIDI" className="w-full pr-1.5">
          <Glyph>
            <circle cx="12.5" cy="12.5" r="7.5" />
            <g fill="#1c1d21">
              <circle cx="8" cy="12" r="1.1" /><circle cx="9.5" cy="8.5" r="1.1" /><circle cx="12.5" cy="7.2" r="1.1" /><circle cx="15.5" cy="8.5" r="1.1" /><circle cx="17" cy="12" r="1.1" />
              <path d="M10.500 18h4v2h-4z" />
            </g>
          </Glyph>
          <Caret />
        </IconButton>
      </Group>
      <Dots />
      <Group className="ml-[5px]">
        <button type="button" className="w-[38px] text-sm">AQ</button>
      </Group>

      <div className="ml-auto flex items-center pl-[11px]">
        <Locator label="Левый локатор" side="left" />
        <div className="ml-2.5"><Locator label="Правый локатор" side="right" /></div>
        <Group className="ml-[5px] mr-[3px]">
          <IconButton label="Блокировка" className="bg-white text-[#1c1d21]">
            <Glyph><rect x="8" y="11" width="10" height="8" rx="1" /><path d="M10 11.500V8.500a3 3 0 0 1 6 0v3" fill="none" stroke="currentColor" strokeWidth="2" /></Glyph>
          </IconButton>
          <IconButton label="Punch in">
            <Glyph><path d="M8.500 7h8l-4 6.500z" /><circle cx="12.5" cy="16.5" r="1.6" /><path d="M9 25l3.500-3.500L16 25z" fill="#25272c" /></Glyph>
          </IconButton>
          <IconButton label="Punch out">
            <Glyph><path d="M8.500 17.500h8l-4-6z" /><circle cx="12.5" cy="8" r="1.6" /><path d="M9 25l3.500-3.500L16 25z" fill="#25272c" /></Glyph>
          </IconButton>
        </Group>
        <Dots />

        <div className="ml-[5px] mr-[3px] flex h-8 rounded-[3px] border-2 border-[#c6c7c9] bg-[#77787b]">
          <IconButton label="Цикл" className="w-[49px]">
            <Glyph><path d="M6 16.500h9a4 4 0 0 0 0-8.500h-4.500M6 16.500l5-4" fill="none" stroke="currentColor" strokeWidth="1.8" /></Glyph>
          </IconButton>
          <IconButton label="Стоп" className="w-[50px] bg-[#e6e8ee] text-[#1c1d21]">
            <Glyph><rect x="7.5" y="7.5" width="10" height="10" fill="none" stroke="currentColor" strokeWidth="2.2" /></Glyph>
          </IconButton>
          <IconButton label="Пуск" className="w-[50px]">
            <Glyph><path d="M8 6.500l10 6-10 6z" fill="none" stroke="currentColor" strokeWidth="2" /></Glyph>
          </IconButton>
          <IconButton label="Запись" className="w-[47px]">
            <Glyph><circle cx="12.5" cy="12.5" r="5.6" fill="none" stroke="currentColor" strokeWidth="2" /></Glyph>
          </IconButton>
        </div>
        <Dots />

        <Group className="ml-[5px] mr-[5px]">
          <IconButton label="Пре-ролл" disabled className="w-[38px] text-[#8f9094]">
            <Glyph><circle cx="10" cy="12.5" r="2.6" /><path d="M12 6.500c7 1.500 7 10.500 0 12 4-3.500 4-8.500 0-12z" stroke="currentColor" /></Glyph>
          </IconButton>
        </Group>
        <Group dark className="mr-[3px] w-[150px]">
          <IconButton label="Формат времени" className="w-[25px] border-r border-[#7b7c80]">
            <Glyph><circle cx="12.5" cy="12.5" r="6" /><path d="M12.500 8.500v4h3.500" fill="none" stroke="#1c1d21" strokeWidth="1.5" /></Glyph>
          </IconButton>
          <TimeInput label="Позиция" />
        </Group>
        <Dots />
        <Group dark className="ml-[5px] mr-[3px] w-[107px]">
          <IconButton label="Темпо-трек" className="bg-white text-[#1c1d21]">
            <Glyph>
              <ellipse cx="9.5" cy="16.5" rx="2.8" ry="2.2" /><path d="M10.800 6h1.500v10.500h-1.500zM15.200 9h1.600v8h-1.600zM13 10l3-4 3 4zM13 16l3 4 3-4z" />
            </Glyph>
          </IconButton>
          <input type="text" aria-label="Темп" defaultValue="120.000" className="min-w-0 flex-1 bg-transparent text-right text-xs outline-none" />
          <svg viewBox="0 0 8 15" className="mx-2 h-[15px] w-2 shrink-0 self-center" fill="currentColor"><path d="M0 6.500L4 0l4 6.500zM0 8.500L4 15l4-6.500z" /></svg>
        </Group>
        <Dots />
      </div>

      <div className="ml-auto flex items-center">
        <Group className="mr-[3px]">
          <IconButton label="Метроном">
            <Glyph><path d="M9 18.500l2.300-10.500h1.500l-1.500 8h4l.8 2.500zM12.800 14l3-7M14.500 6h3.500M17 5v3" stroke="currentColor" strokeWidth="1.5" /></Glyph>
          </IconButton>
          <IconButton label="Настройка метронома"><EditGlyph /></IconButton>
        </Group>
        <Dots />
        <Group dark className="ml-[5px] mr-[3px] w-[89px]">
          <span className="w-[26px] border-r border-[#4c4e51]" />
        </Group>
        <Dots />
        <Group dark className="ml-[5px] w-[19px]">
          <IconButton label="Настройка транспорта" className="w-full"><GearGlyph className="h-3 w-3" /></IconButton>
        </Group>
      </div>
    </footer>
  )
}

export default function App() {
  return (
    <div className="flex min-h-screen flex-col bg-[#525f6d] px-px pb-px font-['Open_Sans',sans-serif] text-xs">
      <TitleBar />
      <Toolbar />
      <div className="flex h-10 shrink-0 items-center justify-center bg-[#18191b] pl-1 pt-1 text-[11px] font-semibold text-[#9b9ca1]">
        Нет выбранных объектов
      </div>
      <main className="grid flex-1 grid-cols-[173px_1fr_230px] gap-x-1 bg-[#070708] px-1 pb-1 pt-1">
        <LeftZone />
        <div className="flex min-w-0 flex-col">
          <ProjectWindow />
          <div className="mt-1 flex flex-1 flex-col">
            <MidiRemote />
            <LowerTabs />
          </div>
        </div>
        <RightZone />
      </main>
      <Transport />
    </div>
  )
}
